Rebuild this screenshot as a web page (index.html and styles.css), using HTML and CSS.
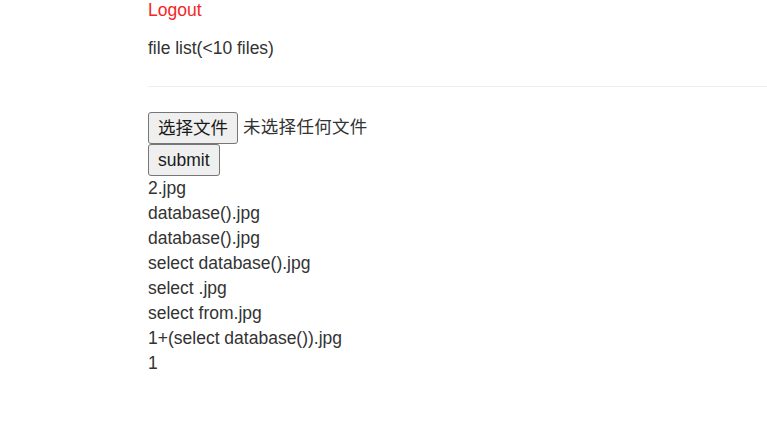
FILE: index.html
```html
<!DOCTYPE html>
<html lang="zh">
<head>
<meta charset="utf-8">
<title>file list</title>
<link rel="stylesheet" href="styles.css">
</head>
<body>
<div class="page">
  <a class="logout" href="#">Logout</a>
  <p class="title">file list(&lt;10 files)</p>
  <hr class="rule">
  <form class="upload">
    <div class="file-row">
      <button type="button" class="btn">选择文件</button>
      <span class="file-status">未选择任何文件</span>
    </div>
    <div class="submit-row">
      <button type="button" class="btn">submit</button>
    </div>
  </form>
  <ul class="files">
    <li>2.jpg</li>
    <li>database().jpg</li>
    <li>database().jpg</li>
    <li>select database().jpg</li>
    <li>select .jpg</li>
    <li>select from.jpg</li>
    <li>1+(select database()).jpg</li>
    <li>1</li>
  </ul>
</div>
</body>
</html>
```

FILE: styles.css
```css
html, body {
  margin: 0;
  padding: 0;
  background: #ffffff;
}
body {
  font-family: "Liberation Sans", Arial, "Noto Sans CJK SC", sans-serif;
  font-size: 17.5px;
  line-height: 25px;
  color: #333333;
}
.page {
  padding-left: 148px;
}
.logout {
  display: block;
  line-height: 20px;
  color: #f42626;
  text-decoration: none;
}
.title {
  margin: 15.5px 0 0;
  line-height: 25px;
}
.rule {
  margin: 25px 0 0;
  border: 0;
  border-top: 1px solid #eeeeee;
  height: 0;
}
.upload {
  margin: 25px 0 0;
}
.file-row {
  display: flex;
  align-items: center;
  gap: 5px;
}
.submit-row {
  display: flex;
}
.btn {
  box-sizing: border-box;
  height: 32px;
  padding: 0 9px;
  margin: 0;
  font-family: "Liberation Sans", Arial, "Noto Sans CJK SC", sans-serif;
  font-size: 17.5px;
  line-height: 30px;
  color: #1a1a1a;
  background: #efefef;
  border: 1px solid #767676;
  border-radius: 3px;
}
.file-status {
  font-family: "Liberation Sans", Arial, "Noto Sans CJK SC", sans-serif;
  color: #333333;
  letter-spacing: 0.3px;
}
.files {
  list-style: none;
  margin: 0;
  padding: 0;
}
.files li {
  line-height: 25px;
}
```
